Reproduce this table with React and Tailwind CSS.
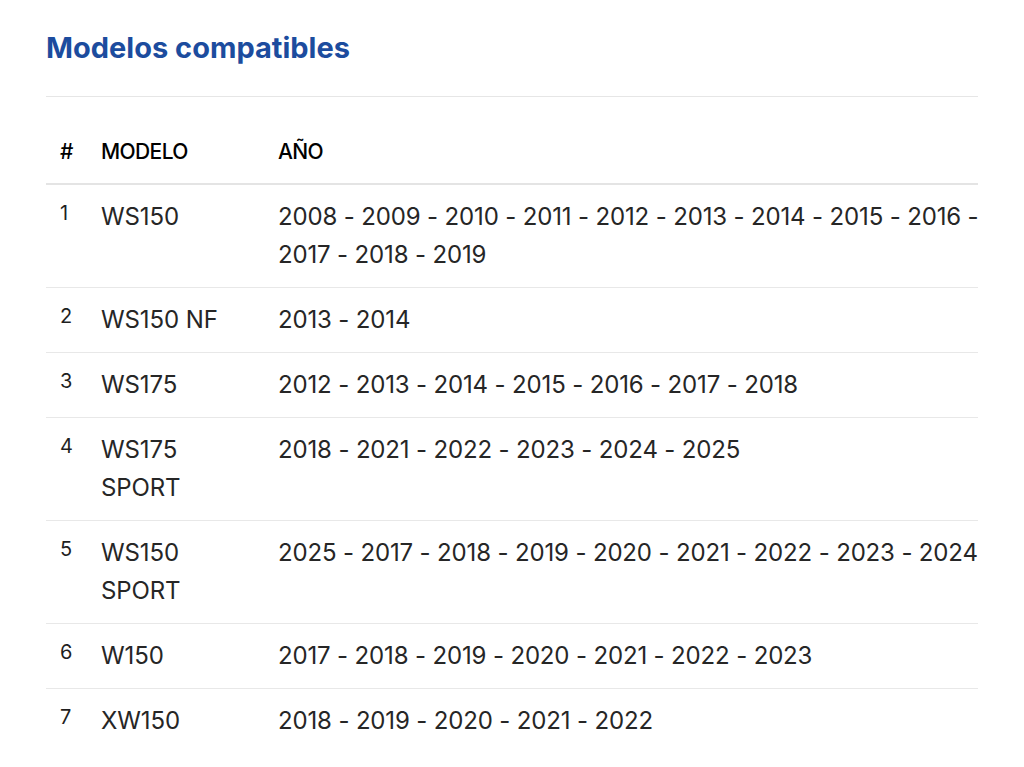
import React from "react";

const modelos = [
  { n: 1, modelo: "WS150", anos: [2008, 2009, 2010, 2011, 2012, 2013, 2014, 2015, 2016, 2017, 2018, 2019] },
  { n: 2, modelo: "WS150 NF", anos: [2013, 2014] },
  { n: 3, modelo: "WS175", anos: [2012, 2013, 2014, 2015, 2016, 2017, 2018] },
  { n: 4, modelo: "WS175 SPORT", anos: [2018, 2021, 2022, 2023, 2024, 2025] },
  { n: 5, modelo: "WS150 SPORT", anos: [2025, 2017, 2018, 2019, 2020, 2021, 2022, 2023, 2024] },
  { n: 6, modelo: "W150", anos: [2017, 2018, 2019, 2020, 2021, 2022, 2023] },
  { n: 7, modelo: "XW150", anos: [2018, 2019, 2020, 2021, 2022] },
];

const App = () => {
  return (
    <div className="min-h-[767px] bg-white px-[46px] pt-[29px] font-['Inter',sans-serif]">
      <h2 className="text-[29px] leading-[38px] font-bold text-[#1c4c9e]">
        Modelos compatibles
      </h2>
      <div className="mt-[29px] border-t border-[#e6e6e6]" />
      <div className="overflow-hidden">
        <table className="table-fixed border-collapse w-[976px] text-left">
          <colgroup>
            <col className="w-[41px]" />
            <col className="w-[177px]" />
            <col className="w-[758px]" />
          </colgroup>
          <thead>
            <tr className="border-b-2 border-[#e4e4e4]">
              <th className="pl-[14px] pt-[41px] pb-[17px] text-[21px] leading-[28px] font-medium tracking-[-0.6px] text-black">#</th>
              <th className="pl-[14px] pt-[41px] pb-[17px] text-[21px] leading-[28px] font-medium tracking-[-0.6px] text-black">MODELO</th>
              <th className="pl-[14px] pt-[41px] pb-[17px] text-[21px] leading-[28px] font-medium tracking-[-0.6px] text-black">AÑO</th>
            </tr>
          </thead>
          <tbody>
            {modelos.map((m) => (
              <tr key={m.n} className="border-b border-[#e8e8e8] last:border-b-0">
                <td className="pl-[14px] pt-[13px] pb-[13px] align-top text-[20px] leading-[30px] text-[#1f1f1f]">
                  {m.n}
                </td>
                <td className="pl-[14px] pr-[14px] pt-[13px] pb-[13px] align-top text-[24px] leading-[38px] tracking-[-0.1px] text-[#262626]">
                  {m.modelo}
                </td>
                <td className="pl-[14px] pr-[14px] pt-[13px] pb-[13px] align-top text-[24px] leading-[38px] tracking-[-0.15px] text-[#262626]">
                  {m.anos.join(" - ")}
                </td>
              </tr>
            ))}
          </tbody>
        </table>
      </div>
    </div>
  );
};

export default App;
